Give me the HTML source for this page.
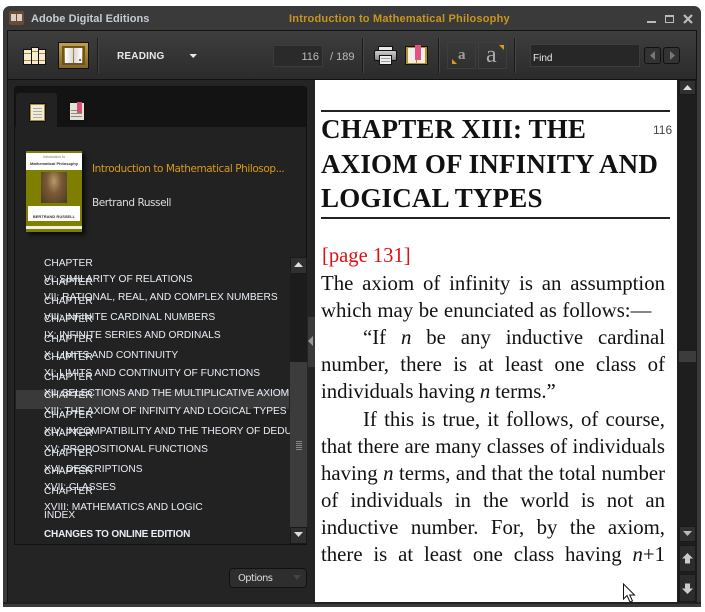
<!DOCTYPE html>
<html><head><meta charset="utf-8"><style>
html,body{margin:0;padding:0;background:#fff;width:705px;height:612px;overflow:hidden}
*{box-sizing:border-box}
.a{position:absolute}
.t{position:absolute;white-space:nowrap;font-family:"Liberation Sans",sans-serif}
.toc{position:absolute;left:44px;white-space:nowrap;font:10.2px/12px "Liberation Sans",sans-serif;color:#e8eef5;margin-top:1.5px}
.bl{position:absolute;left:321px;width:344px;font:20.8px/27px "Liberation Serif",serif;color:#111;white-space:nowrap}
.j{text-align:justify;text-align-last:justify}
.h{position:absolute;left:321px;font:bold 27px/35px "Liberation Serif",serif;letter-spacing:.18px;color:#111;white-space:nowrap}
.sep{position:absolute;width:1px;background:#1b1b1b;border-right:1px solid #444;width:2px}
.sb{position:absolute;background:#2a2a2a;border:1px solid #1a1a1a}
</style></head><body>
<div class="a" style="left:3px;top:6px;width:698px;height:601px;background:#3a3a3a;border-radius:7px 7px 0 0"></div>
<!-- title bar -->
<div class="a" style="left:9px;top:11px;width:15px;height:14px;background:#6d4a35;border-radius:2px"></div>
<div class="a" style="left:11px;top:14px;width:5px;height:7px;background:#d8d0c4"></div>
<div class="a" style="left:17px;top:14px;width:5px;height:7px;background:#d8d0c4"></div>
<div class="t" style="left:31px;top:12px;font-size:11px;line-height:14px;font-weight:bold;letter-spacing:.05px;color:#c4ccd6">Adobe Digital Editions</div>
<div class="t" style="left:289px;top:12px;font-size:11px;line-height:14px;font-weight:bold;letter-spacing:.21px;color:#c8961c">Introduction to Mathematical Philosophy</div>
<div class="a" style="left:647px;top:21px;width:9px;height:2px;background:#bbb"></div>
<div class="a" style="left:665px;top:15px;width:9px;height:8px;border:1px solid #bbb;border-top-width:2px"></div>
<svg class="a" style="left:683px;top:14px" width="10" height="10"><path d="M1 1L9 9M9 1L1 9" stroke="#bbb" stroke-width="2.2"/></svg>
<!-- toolbar -->
<div class="a" style="left:7px;top:30px;width:690px;height:50px;background:linear-gradient(#3e3e3e,#2b2b2b);border:1px solid #111"></div>
<!-- library icon -->
<div class="a" style="left:23px;top:49px;width:9px;height:16px;background:linear-gradient(#f6edd0 0 3px,#b08a2c 3px 4px,#f6edd0 4px 10px,#b08a2c 10px 11px,#f6edd0 11px);border:1px solid #111"></div>
<div class="a" style="left:31px;top:47px;width:8px;height:18px;background:linear-gradient(#f6edd0 0 3px,#b08a2c 3px 4px,#f6edd0 4px 12px,#b08a2c 12px 13px,#f6edd0 13px);border:1px solid #111"></div>
<div class="a" style="left:38px;top:49px;width:8px;height:16px;background:linear-gradient(#f6edd0 0 3px,#b08a2c 3px 4px,#f6edd0 4px 10px,#b08a2c 10px 11px,#f6edd0 11px);border:1px solid #111"></div>
<!-- reading icon -->
<div class="a" style="left:58px;top:42px;width:31px;height:27px;background:linear-gradient(#c49f42,#85662a);border:1px solid #111"></div>
<div class="a" style="left:62px;top:46px;width:23px;height:19px;border:2px solid #6e5420"></div>
<div class="a" style="left:65px;top:48px;width:8px;height:15px;background:linear-gradient(90deg,#fff,#d8d8d8)"></div>
<div class="a" style="left:74px;top:48px;width:8px;height:15px;background:linear-gradient(90deg,#d8d8d8,#fff)"></div>
<div class="a" style="left:78px;top:58px;width:4px;height:4px;background:#8a6c2a;border:1px solid #eee"></div>
<div class="sep" style="left:97px;top:38px;height:35px"></div>
<div class="t" style="left:117px;top:50px;font-size:10px;line-height:13px;font-weight:bold;letter-spacing:.2px;color:#e8e8e8">READING</div>
<svg class="a" style="left:189px;top:53px" width="9" height="6"><path d="M0.5 1H8L4.2 5Z" fill="#e8e8e8"/></svg>
<!-- page num -->
<div class="a" style="left:273px;top:45px;width:50px;height:22px;background:#2a2a2a;border:1px solid #3c3c3c"></div>
<div class="t" style="left:273px;top:50px;width:46px;text-align:right;font-size:11px;line-height:14px;color:#bbb">116</div>
<div class="t" style="left:330px;top:50px;font-size:11px;line-height:14px;color:#bbb">/ 189</div>
<div class="sep" style="left:362px;top:38px;height:35px"></div>
<!-- print -->
<div class="a" style="left:378px;top:46px;width:15px;height:8px;background:#e8e8e8;border:1px solid #111"></div>
<div class="a" style="left:374px;top:50px;width:23px;height:11px;background:linear-gradient(#ccc,#888);border:1px solid #111;border-radius:2px"></div>
<div class="a" style="left:379px;top:55px;width:13px;height:10px;background:#eee;border:1px solid #111"></div>
<div class="a" style="left:381px;top:58px;width:9px;height:1px;background:#999"></div>
<div class="a" style="left:381px;top:61px;width:9px;height:1px;background:#999"></div>
<!-- bookmark book -->
<div class="a" style="left:405px;top:46px;width:23px;height:19px;background:#b88f30;border:1px solid #111"></div>
<div class="a" style="left:408px;top:48px;width:8px;height:15px;background:#f1f0e8"></div>
<div class="a" style="left:417px;top:48px;width:8px;height:15px;background:#f1f0e8"></div>
<div class="a" style="left:415px;top:45px;width:6px;height:15px;background:#e25580"></div>
<div class="sep" style="left:438px;top:38px;height:35px"></div>
<!-- font size -->
<div class="a" style="left:447px;top:42px;width:29px;height:27px;border:1px solid #3e3e3e"></div>
<div class="a" style="left:478px;top:42px;width:29px;height:27px;border:1px solid #3e3e3e"></div>
<div class="t" style="left:458px;top:46px;font:bold 15px/18px 'Liberation Serif',serif;color:#a0a0a0">a</div>
<div class="t" style="left:486px;top:41px;font:24px/28px 'Liberation Serif',serif;color:#aaa">a</div>
<svg class="a" style="left:452px;top:59px" width="6" height="6"><path d="M0 0V5H5Z" fill="#d99a1e"/></svg>
<svg class="a" style="left:499px;top:45px" width="6" height="6"><path d="M0 0H5V5Z" fill="#d99a1e"/></svg>
<div class="sep" style="left:514px;top:38px;height:35px"></div>
<!-- find -->
<div class="a" style="left:530px;top:44px;width:110px;height:23px;background:#272727;border:1px solid #3d3d3d"></div>
<div class="t" style="left:533px;top:52px;font-size:10px;line-height:13px;color:#e4e8ee">Find</div>
<div class="a" style="left:644px;top:47px;width:17px;height:17px;background:#333;border:1px solid #111;border-radius:3px"></div>
<div class="a" style="left:663px;top:47px;width:17px;height:17px;background:#333;border:1px solid #111;border-radius:3px"></div>
<svg class="a" style="left:649px;top:51px" width="7" height="9"><path d="M6 0V9L1 4.5Z" fill="#777"/></svg>
<svg class="a" style="left:669px;top:51px" width="7" height="9"><path d="M1 0V9L6 4.5Z" fill="#777"/></svg>
<!-- left pane -->
<div class="a" style="left:7px;top:80px;width:308px;height:523px;background:#242424;border-left:1px solid #111"></div>
<div class="a" style="left:14px;top:86px;width:293px;height:459px;background:#222;border:1px solid #111;border-radius:3px 3px 0 0"></div>
<div class="a" style="left:15px;top:87px;width:291px;height:40px;background:#131313"></div>
<div class="a" style="left:16px;top:93px;width:41px;height:34px;background:#222;border-radius:3px 3px 0 0"></div>
<div class="a" style="left:29px;top:103px;width:17px;height:19px;background:#f2ecd4;border:1px solid #111;outline:1px solid #a88a3a;outline-offset:-2px"></div>
<div class="a" style="left:33px;top:108px;width:9px;height:1px;background:#aaa;box-shadow:0 3px #aaa,0 6px #aaa,0 9px #aaa"></div>
<div class="a" style="left:69px;top:102px;width:16px;height:19px;background:#e6e2d4;border:1px solid #111"></div>
<div class="a" style="left:71px;top:110px;width:11px;height:1px;background:#888;box-shadow:0 3px #888,0 6px #888"></div>
<div class="a" style="left:77px;top:102px;width:5px;height:11px;background:#d64f78"></div>
<!-- cover -->
<div class="a" style="left:26px;top:151px;width:56px;height:81px;background:#7e7e00;box-shadow:3px 3px 4px #0b0b0b"></div>
<div class="a" style="left:26px;top:153px;width:56px;height:17px;background:#fff"></div>
<div class="t" style="left:28px;top:155px;width:52px;text-align:center;font:3.5px/5px 'Liberation Sans',sans-serif;color:#777">Introduction to</div>
<div class="t" style="left:28px;top:161px;width:52px;text-align:center;font:bold 4px/6px 'Liberation Sans',sans-serif;color:#333">Mathematical Philosophy</div>
<div class="a" style="left:41px;top:172px;width:26px;height:31px;background:radial-gradient(ellipse at 50% 30%,#b89a6a 0,#7a5a35 40%,#4a3a22 100%)"></div>
<div class="a" style="left:28px;top:206px;width:52px;height:15px;background:#fff"></div>
<div class="t" style="left:28px;top:214px;width:52px;text-align:center;font:bold 4px/6px 'Liberation Sans',sans-serif;color:#333">BERTRAND RUSSELL</div>
<div class="a" style="left:26px;top:226px;width:56px;height:3px;background:#f0f0e0"></div>
<div class="t" style="left:92px;top:162px;font:10.5px/14px 'DejaVu Sans',sans-serif;letter-spacing:-.43px;color:#d99a16">Introduction to Mathematical Philosop...</div>
<div class="t" style="left:92px;top:196px;font:10.5px/14px 'DejaVu Sans',sans-serif;letter-spacing:-.45px;color:#ddd">Bertrand Russell</div>
<!-- toc highlight -->
<div class="a" style="left:16px;top:390px;width:273px;height:19px;background:#3a3a3a"></div>
<div class="toc" style="top:256px">CHAPTER</div>
<div class="toc" style="top:275px">CHAPTER</div>
<div class="toc" style="top:294px">CHAPTER</div>
<div class="toc" style="top:312px">CHAPTER</div>
<div class="toc" style="top:332px">CHAPTER</div>
<div class="toc" style="top:350px">CHAPTER</div>
<div class="toc" style="top:370px">CHAPTER</div>
<div class="toc" style="top:388px">CHAPTER</div>
<div class="toc" style="top:408px">CHAPTER</div>
<div class="toc" style="top:426px">CHAPTER</div>
<div class="toc" style="top:446px">CHAPTER</div>
<div class="toc" style="top:464px">CHAPTER</div>
<div class="toc" style="top:484px">CHAPTER</div>
<div class="toc" style="top:272px">VI: SIMILARITY OF RELATIONS</div>
<div class="toc" style="top:290px">VII: RATIONAL, REAL, AND COMPLEX NUMBERS</div>
<div class="toc" style="top:310px">VIII: INFINITE CARDINAL NUMBERS</div>
<div class="toc" style="top:328px">IX: INFINITE SERIES AND ORDINALS</div>
<div class="toc" style="top:348px">X: LIMITS AND CONTINUITY</div>
<div class="toc" style="top:366px">XI: LIMITS AND CONTINUITY OF FUNCTIONS</div>
<div class="toc" style="top:386px;letter-spacing:-.08px">XII: SELECTIONS AND THE MULTIPLICATIVE AXIOM</div>
<div class="toc" style="top:404px;letter-spacing:-.05px">XIII: THE AXIOM OF INFINITY AND LOGICAL TYPES</div>
<div class="toc" style="top:424px;width:246px;overflow:hidden">XIV: INCOMPATIBILITY AND THE THEORY OF DEDUCTION</div>
<div class="toc" style="top:442px">XV: PROPOSITIONAL FUNCTIONS</div>
<div class="toc" style="top:462px">XVI: DESCRIPTIONS</div>
<div class="toc" style="top:480px">XVII: CLASSES</div>
<div class="toc" style="top:500px">XVIII: MATHEMATICS AND LOGIC</div>
<div class="toc" style="top:508px">INDEX</div>
<div class="toc" style="top:527px;font-weight:bold;font-size:10px;letter-spacing:-.17px">CHANGES TO ONLINE EDITION</div>
<!-- toc scrollbar -->
<div class="a" style="left:290px;top:257px;width:17px;height:287px;background:#1c1c1c"></div>
<div class="sb" style="left:290px;top:257px;width:17px;height:17px;background:#303030"></div>
<svg class="a" style="left:294px;top:262px" width="9" height="6"><path d="M0 5H9L4.5 0Z" fill="#ddd"/></svg>
<div class="a" style="left:290px;top:362px;width:17px;height:165px;background:#3c3c3c"></div>
<div class="a" style="left:296px;top:441px;width:6px;height:9px;background:repeating-linear-gradient(#888 0 1px,transparent 1px 2px)"></div>
<div class="sb" style="left:290px;top:527px;width:17px;height:17px;background:#303030"></div>
<svg class="a" style="left:294px;top:532px" width="9" height="6"><path d="M0 0H9L4.5 5Z" fill="#ddd"/></svg>
<!-- divider handle -->
<div class="a" style="left:308px;top:317px;width:7px;height:50px;background:#3a3a3a"></div>
<svg class="a" style="left:308px;top:336px" width="6" height="10"><path d="M5 0V10L0 5Z" fill="#999"/></svg>
<!-- options -->
<div class="a" style="left:229px;top:568px;width:78px;height:20px;background:#2e2e2e;border:1px solid #111;border-radius:4px"></div>
<div class="t" style="left:238px;top:572px;font:10px/14px 'DejaVu Sans',sans-serif;letter-spacing:-.6px;color:#ddd">Options</div>
<svg class="a" style="left:293px;top:575px" width="8" height="5"><path d="M0 0H8L4 5Z" fill="#444"/></svg>
<!-- page -->
<div class="a" style="left:315px;top:80px;width:362px;height:522px;background:#fff"></div>
<div class="a" style="left:321px;top:110px;width:349px;height:2px;background:#222"></div>
<div class="t" style="left:653px;top:123px;font-size:12px;line-height:14px;color:#444">116</div>
<div class="h" style="top:112px">CHAPTER XIII: THE</div>
<div class="h" style="top:147px">AXIOM OF INFINITY AND</div>
<div class="h" style="top:181px">LOGICAL TYPES</div>
<div class="a" style="left:321px;top:217px;width:349px;height:2px;background:#222"></div>
<div class="bl" style="top:243px;left:322px;font-size:20.6px;color:#e01010">[page 131]</div>
<div class="bl j" style="top:270px">The axiom of infinity is an assumption</div>
<div class="bl" style="top:297px;word-spacing:.35px">which may be enunciated as follows:—</div>
<div class="bl j" style="top:324px;left:363px;width:302px">“If <i>n</i> be any inductive cardinal</div>
<div class="bl j" style="top:351px">number, there is at least one class of</div>
<div class="bl" style="top:378px;word-spacing:-.3px">individuals having <i>n</i> terms.”</div>
<div class="bl j" style="top:406px;left:363px;width:302px">If this is true, it follows, of course,</div>
<div class="bl j" style="top:433px">that there are many classes of individuals</div>
<div class="bl j" style="top:460px">having <i>n</i> terms, and that the total number</div>
<div class="bl j" style="top:487px">of individuals in the world is not an</div>
<div class="bl j" style="top:514px">inductive number. For, by the axiom,</div>
<div class="bl j" style="top:541px">there is at least one class having <i>n</i>+1</div>
<!-- cursor -->
<svg class="a" style="left:622px;top:583px" width="15" height="20"><path d="M1.5 1V16L5 12.5L8 19L10.5 18L7.8 12H12.5Z" fill="#fff" stroke="#111" stroke-width="1"/></svg>
<!-- main scrollbar -->
<div class="a" style="left:677px;top:80px;width:20px;height:522px;background:#1e1e1e"></div>
<div class="sb" style="left:679px;top:80px;width:17px;height:15px;background:#303030"></div>
<svg class="a" style="left:683px;top:85px" width="9" height="5"><path d="M0 5H9L4.5 0Z" fill="#ddd"/></svg>
<div class="a" style="left:679px;top:351px;width:17px;height:11px;background:#3c3c3c"></div>
<div class="sb" style="left:679px;top:526px;width:17px;height:16px;background:#303030"></div>
<svg class="a" style="left:683px;top:531px" width="9" height="5"><path d="M0 0H9L4.5 5Z" fill="#bbb"/></svg>
<div class="sb" style="left:679px;top:545px;width:17px;height:27px;background:#2c2c2c"></div>
<div class="sb" style="left:679px;top:574px;width:17px;height:28px;background:#2c2c2c"></div>
<svg class="a" style="left:682px;top:553px" width="11" height="11"><path d="M5.5 0L11 5.5H8V10.5H3V5.5H0Z" fill="#ccc"/></svg>
<svg class="a" style="left:682px;top:583px" width="11" height="11"><path d="M5.5 11L11 5.5H8V0.5H3V5.5H0Z" fill="#ccc"/></svg>
<!-- bottom edge -->
<div class="a" style="left:3px;top:602px;width:698px;height:2px;background:#222"></div>
</body></html>
